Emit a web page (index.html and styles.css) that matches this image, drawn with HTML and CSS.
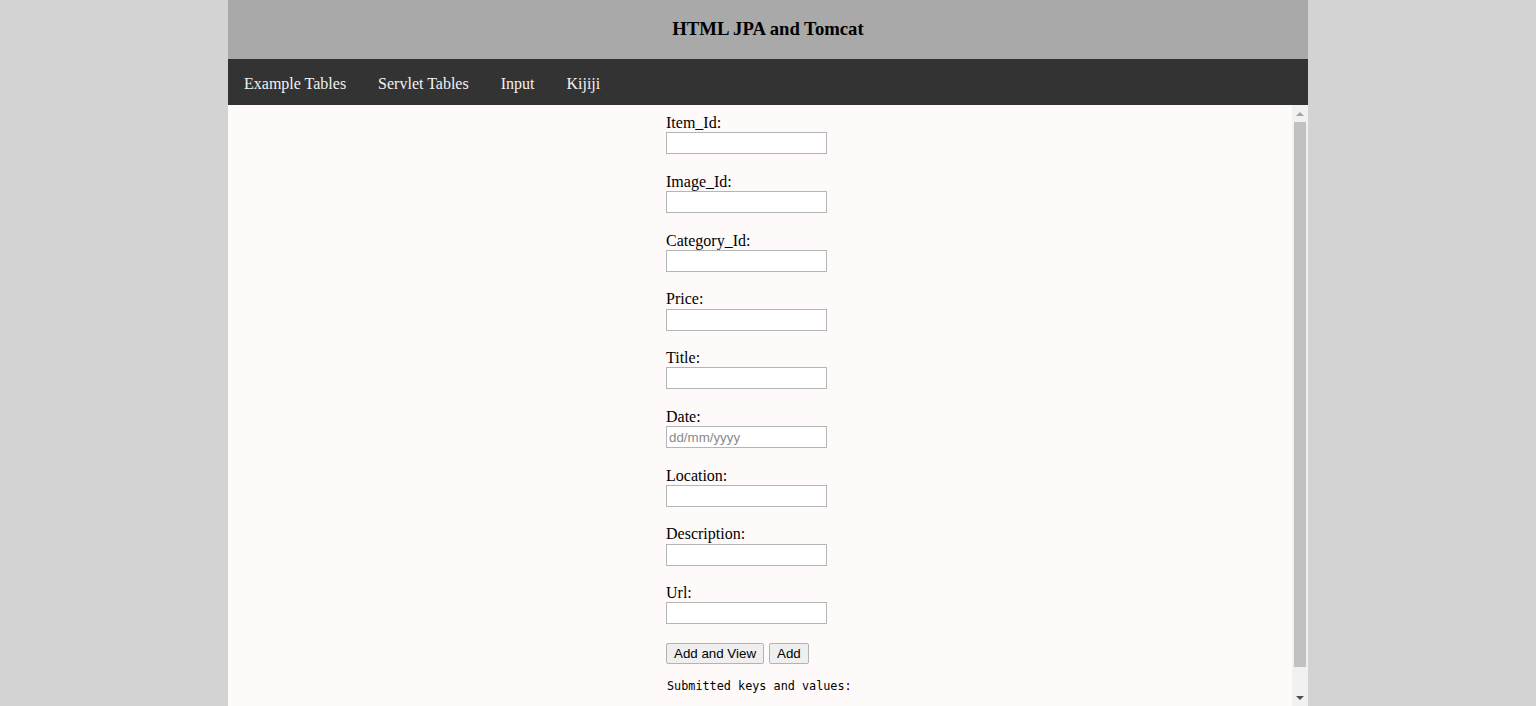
FILE: index.html
```html
<!DOCTYPE html>
<html>
<head>
<meta charset="utf-8">
<title>HTML JPA and Tomcat</title>
<link rel="stylesheet" href="styles.css">
</head>
<body>
<div class="page">
  <header class="header">
    <h3 class="title">HTML JPA and Tomcat</h3>
  </header>
  <nav class="nav">
    <a class="nav-link" href="#">Example Tables</a>
    <a class="nav-link" href="#">Servlet Tables</a>
    <a class="nav-link" href="#">Input</a>
    <a class="nav-link" href="#">Kijiji</a>
  </nav>
  <div class="frame">
    <div class="frame-content">
      <form class="form">
        <div class="group"><label class="label">Item_Id:</label><input class="field" type="text"></div>
        <div class="group"><label class="label">Image_Id:</label><input class="field" type="text"></div>
        <div class="group"><label class="label">Category_Id:</label><input class="field" type="text"></div>
        <div class="group"><label class="label">Price:</label><input class="field" type="text"></div>
        <div class="group"><label class="label">Title:</label><input class="field" type="text"></div>
        <div class="group"><label class="label">Date:</label><input class="field" type="text" placeholder="dd/mm/yyyy"></div>
        <div class="group"><label class="label">Location:</label><input class="field" type="text"></div>
        <div class="group"><label class="label">Description:</label><input class="field" type="text"></div>
        <div class="group"><label class="label">Url:</label><input class="field" type="text"></div>
        <div class="buttons">
          <button class="btn" type="button">Add and View</button>
          <button class="btn" type="button">Add</button>
        </div>
        <pre class="result">Submitted keys and values:</pre>
      </form>
    </div>
    <div class="scrollbar">
      <div class="arrow arrow-up"></div>
      <div class="track"><div class="thumb"></div></div>
      <div class="arrow arrow-down"></div>
    </div>
  </div>
</div>
</body>
</html>
```
FILE: styles.css
```css
html, body {
  margin: 0;
  padding: 0;
  height: 100%;
}
body {
  background: #d3d3d3;
  font-family: "Liberation Serif", "Times New Roman", serif;
  overflow: hidden;
}
.page {
  width: 1080px;
  margin: 0 auto;
  height: 706px;
  display: flex;
  flex-direction: column;
}
.header {
  background: #a9a9a9;
  height: 59px;
  display: flex;
  align-items: center;
  justify-content: center;
}
.title {
  margin: 0 0 2px;
  font-size: 18.72px;
  font-weight: bold;
  color: #000;
}
.nav {
  background: #333333;
  height: 46px;
  display: flex;
  align-items: center;
}
.nav-link {
  color: #f2f2f2;
  text-decoration: none;
  font-size: 16px;
  padding: 16px 16px 12px;
}
.frame {
  flex: 1;
  display: flex;
  background: #fffafa;
  overflow: hidden;
}
.frame-content {
  flex: 1;
  padding: 9px 0 0 438px;
  overflow: hidden;
}
.form {
  margin: 0;
  font-size: 16px;
  color: #000;
}
.group {
  display: flex;
  flex-direction: column;
  align-items: flex-start;
  margin-bottom: 18.35px;
}
.label {
  line-height: 18.4px;
}
.field {
  box-sizing: border-box;
  width: 161px;
  height: 22px;
  margin: 0;
  border: 1px solid #b5b5b5;
  background: #fff;
  padding: 1px 2px;
  font-family: "Liberation Sans", Arial, sans-serif;
  font-size: 13.33px;
}
.field::placeholder {
  color: #8a8a8a;
}
.buttons {
  display: flex;
  gap: 5px;
  margin-top: 0;
}
.btn {
  font-family: "Liberation Sans", Arial, sans-serif;
  font-size: 13.33px;
  color: #000;
  background: #efefef;
  border: 1px solid #b3b3b3;
  border-radius: 2px;
  height: 21px;
  padding: 1px 7px;
}
.result {
  margin: 15px 0 0 1px;
  font-family: "DejaVu Sans Mono", monospace;
  font-size: 11.8px;
  color: #000;
}
.scrollbar {
  width: 16px;
  background: #f1f1f1;
  display: flex;
  flex-direction: column;
}
.arrow {
  height: 17px;
  display: flex;
  align-items: center;
  justify-content: center;
}
.arrow-up::before {
  content: "";
  border-left: 4px solid transparent;
  border-right: 4px solid transparent;
  border-bottom: 4px solid #a3a3a3;
}
.arrow-down::before {
  content: "";
  border-left: 4px solid transparent;
  border-right: 4px solid transparent;
  border-top: 4px solid #505050;
}
.track {
  flex: 1;
  padding: 0 2px;
}
.thumb {
  height: 545px;
  background: #c1c1c1;
}
```
